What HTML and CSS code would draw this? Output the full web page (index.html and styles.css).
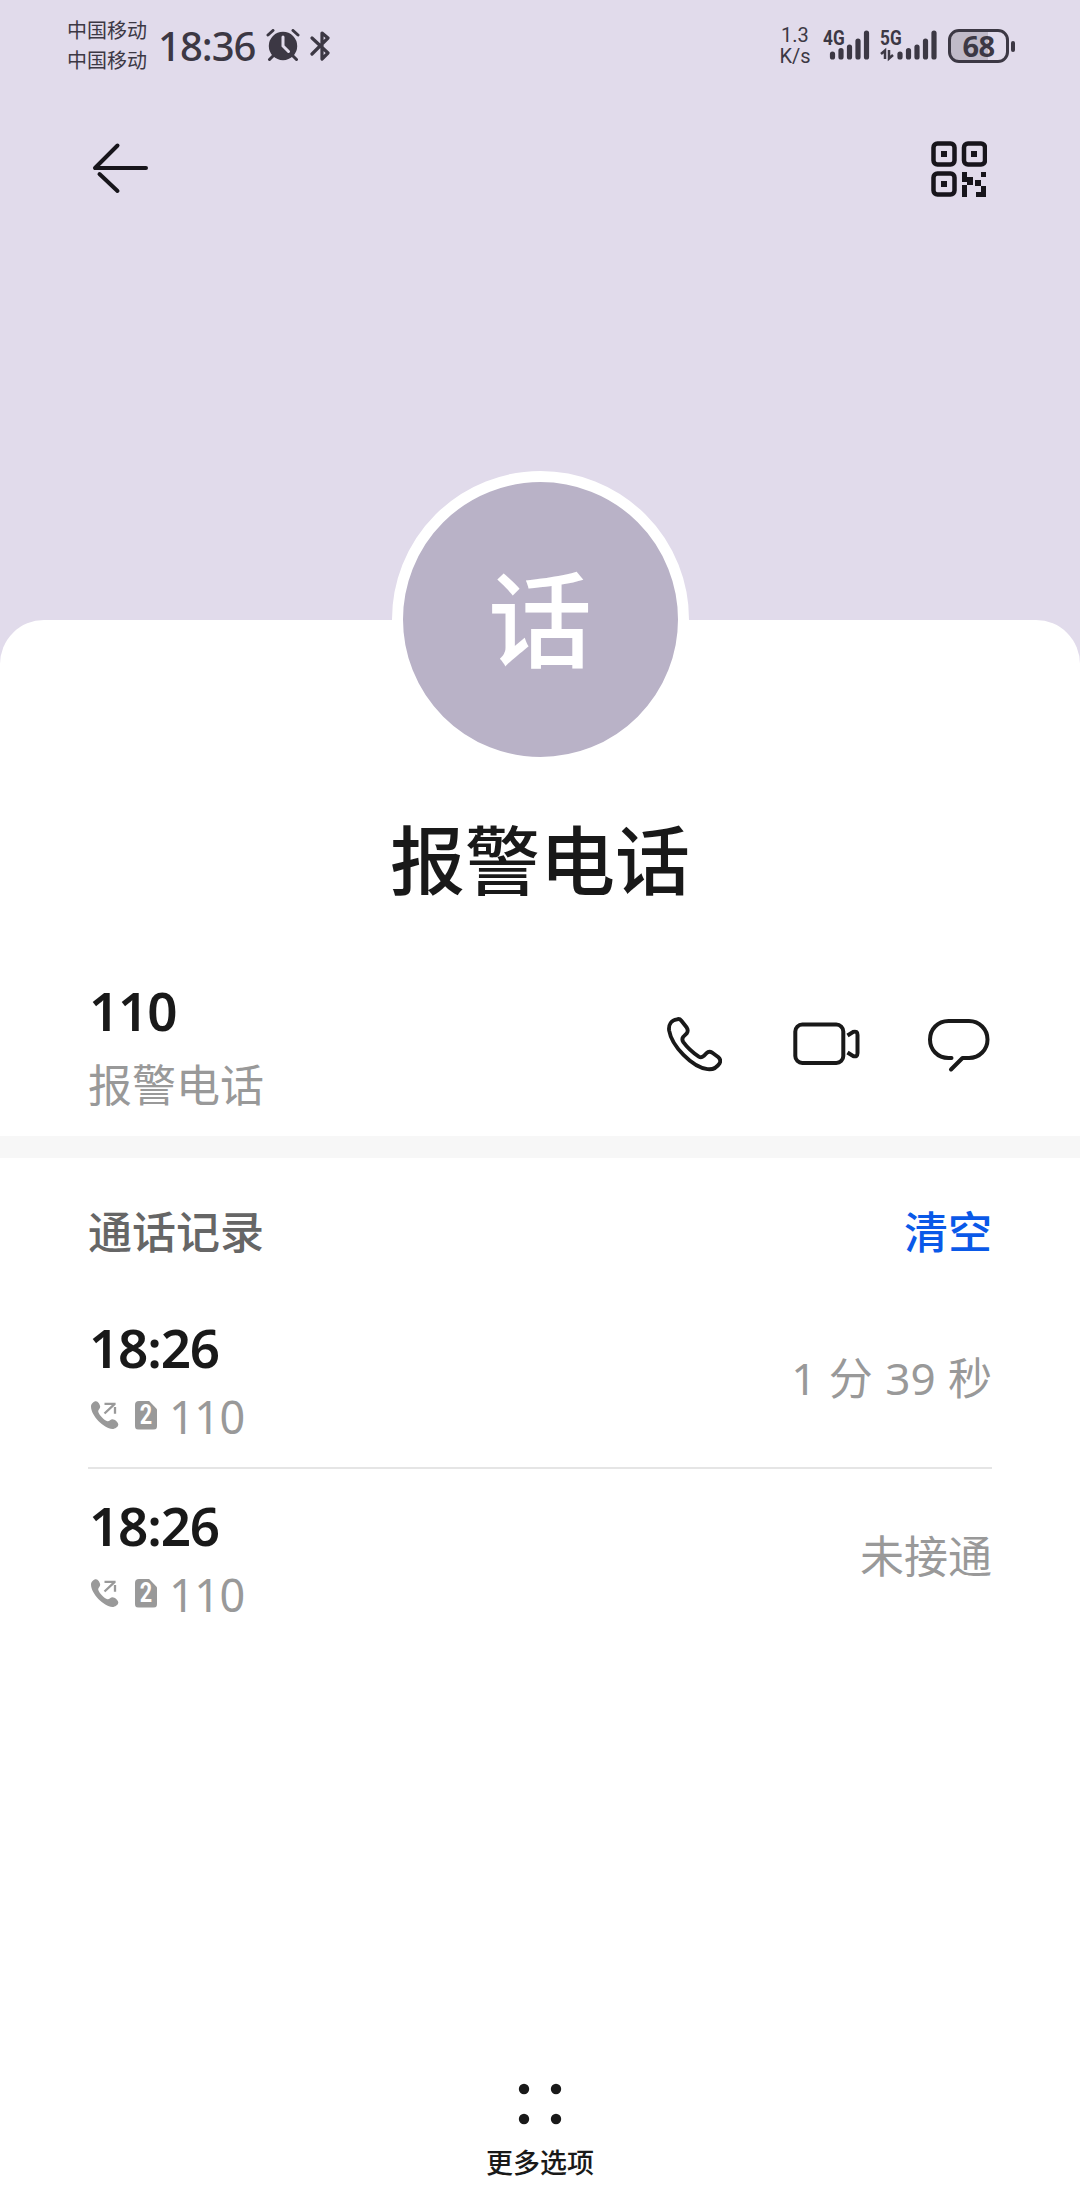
FILE: index.html
```html
<!DOCTYPE html>
<html lang="zh-CN">
<head>
<meta charset="utf-8">
<title>报警电话</title>
<link rel="stylesheet" href="styles.css">
</head>
<body>
<svg class="defs" width="0" height="0">
  <symbol id="outgoing" viewBox="0 0 30 30">
    <path fill="#999" d="M6 1.2C8 1.2 10.2 4.800 10.200 6.800C10.200 8.800 8 9.800 8.200 11.500C8.600 14.500 14.500 20.700 17.500 21.300C19.500 21.500 20.500 19.300 22.500 19.300C24.800 19.300 28.300 22.500 28.300 24.500C28.300 26.800 25 29 22.500 29C13.500 28.500 1 15.500 1 6.500C1 3.800 3.500 1.200 6 1.200Z"/>
    <path fill="none" stroke="#999" stroke-width="2.300" d="M14.500 3.800H25.600M14.500 13.500L24.500 4.200M25 7V13.800"/>
  </symbol>
</svg>
<main class="screen">
  <header class="status">
    <div class="carriers"><span>中国移动</span><span>中国移动</span></div>
    <div class="clock">18:36</div>
    <svg class="alarm" width="34" height="34" viewBox="0 0 34 34">
      <circle cx="17" cy="17" r="14.200" fill="#3c3844"/>
      <path d="M2 6L7 1.500M27 1.500L32 6M7 27L3.500 30.500M27 27L30.500 30.500" stroke="#3c3844" stroke-width="3" stroke-linecap="round"/>
      <path d="M17 8V17L22.500 22.500" fill="none" stroke="#e1dbeb" stroke-width="3" stroke-linecap="round"/>
    </svg>
    <svg class="bluetooth" width="22" height="34" viewBox="0 0 22 34">
      <path d="M2 9L18 24L12 30V4L18 9L2 25" fill="none" stroke="#3c3844" stroke-width="3.200" stroke-linejoin="round" stroke-linecap="round"/>
    </svg>
    <div class="speed"><span>1.3</span><span>K/s</span></div>
    <div class="net net4"><span>4G</span>
      <svg width="48" height="34" viewBox="0 0 48 34"><path d="M9.500 25V28M18 21.500V28M26.500 18V28M35 12V28M43.500 4V28" stroke="#3c3844" stroke-width="5.200" stroke-linecap="round"/></svg>
    </div>
    <div class="net net5"><span>5G</span>
      <svg width="60" height="34" viewBox="0 0 60 34"><path d="M20 25V28M28.500 21.500V28M37 18V28M45.500 12V28M54 4V28" stroke="#3c3844" stroke-width="5.200" stroke-linecap="round"/><path d="M1 25L5 21.500V30M9 21V29.500L13 26" fill="none" stroke="#3c3844" stroke-width="2.500"/></svg>
    </div>
    <div class="battery"><span>68</span></div><i class="tip"></i>
  </header>

  <nav class="toolbar">
    <svg width="56" height="54" viewBox="0 0 56 54" fill="none" stroke="#17151b" stroke-width="4" stroke-linecap="round" stroke-linejoin="round"><path d="M25.500 4.500L3 27H54M25.500 50L7.500 33"/></svg>
    <svg width="56" height="56" viewBox="0 0 56 56">
      <g fill="none" stroke="#17151b" stroke-width="4.500"><rect x="2.500" y="2.500" width="21" height="21" rx="4"/><rect x="33" y="2.500" width="21" height="21" rx="4"/><rect x="2.500" y="32.500" width="21" height="21" rx="4"/></g>
      <path fill="#17151b" d="M10 10h6v6h-6zM40 10h6v6h-6zM10 40h6v6h-6zM31 31h5v5h6v8h-6v12h-5V44h5v-3h-5zM50 31h5v5h-5zM44 39h6v6h-6zM50 45h5v11H45v-5h5z"/>
    </svg>
  </nav>

  <section class="sheet">
    <div class="avatar">话</div>
    <h1 class="name">报警电话</h1>
    <div class="contact">
      <div class="number"><strong>110</strong><span>报警电话</span></div>
      <svg class="call" width="58" height="58" viewBox="0 0 60 60" fill="none" stroke="#191919" stroke-width="4" stroke-linejoin="round"><path d="M13.500 4.500Q16 3.500 18 6L23.500 13Q25.500 16 23.500 19L20 22.500Q18 25 20 28C24 33.500 30 39 36 43Q38.500 44.500 41 42.500L44 39.500Q46.500 37 50 39L56 43.500Q59.500 46.500 57.500 50Q53 57 45 56C29 54 8 32 5.300 16C4.500 10 7.500 5.500 13.500 4.500Z"/></svg>
      <svg class="video" width="68" height="46" viewBox="0 0 68 46" fill="none" stroke="#191919" stroke-width="4"><rect x="2.300" y="3.500" width="48" height="38.500" rx="7"/><path d="M54.500 14.500L60 11Q64.500 9.500 64.500 14V32Q64.500 36.500 60 35L54.500 31.500"/></svg>
      <svg class="chat" width="64" height="56" viewBox="0 0 64 56" fill="none" stroke="#191919" stroke-width="4" stroke-linecap="round" stroke-linejoin="round"><path d="M24.500 41H21.500C10.500 41 3 32.500 3 22.500S10.500 4 21.500 4H42C52.500 4 60.500 12.500 60.500 22.500S52.500 41 42 41H35.500L24 52.500"/></svg>
    </div>
    <div class="band"></div>
    <div class="log-head"><h2>通话记录</h2><a>清空</a></div>
    <div class="entry first">
      <div class="info"><strong>18:26</strong>
        <div class="via"><svg width="30" height="30"><use href="#outgoing"/></svg><b class="sim"><span>2</span></b><span>110</span></div></div>
      <span class="result spaced">1 分 39 秒</span>
    </div>
    <div class="entry">
      <div class="info"><strong>18:26</strong>
        <div class="via"><svg width="30" height="30"><use href="#outgoing"/></svg><b class="sim"><span>2</span></b><span>110</span></div></div>
      <span class="result">未接通</span>
    </div>
  </section>

  <footer class="more">
    <svg width="44" height="44" viewBox="0 0 44 44" fill="#191919"><circle cx="6" cy="7" r="5.200"/><circle cx="38" cy="7" r="5.200"/><circle cx="6" cy="37" r="5.200"/><circle cx="38" cy="37" r="5.200"/></svg>
    <span>更多选项</span>
  </footer>
</main>
</body>
</html>
```
FILE: styles.css
```css
* { box-sizing: border-box; margin: 0; padding: 0; }
body {
  width: 1080px;
  background: #e1dbeb;
  color: #191919;
  font-family: "Noto Sans", "Noto Sans CJK SC", sans-serif;
}
.defs { display: block; height: 0; }
svg { flex: none; display: block; }
.screen { height: 2204px; display: flex; flex-direction: column; overflow: hidden; }

.status { height: 92px; display: flex; align-items: center; padding-left: 67px; color: #3c3844; white-space: nowrap; }
.carriers { width: 91px; display: flex; flex-direction: column; font-size: 20px; line-height: 30px; }
.clock { width: 108px; font-size: 40px; line-height: 50px; font-weight: 500; letter-spacing: -1px; }
.bluetooth { margin-left: 10px; }
.speed { margin-left: 447px; width: 32px; display: flex; flex-direction: column; align-items: center; font: 20px/21px Roboto, sans-serif; }
.net { position: relative; height: 34px; }
.net span { position: absolute; left: 0; top: -1px; font: bold 21px/20px Roboto, sans-serif; transform: scaleX(0.82); transform-origin: left; }
.net4 { margin-left: 12px; }
.net5 { margin-left: 9px; }
.battery { margin-left: 8px; width: 61px; height: 34px; border: 3px solid #3c3844; border-radius: 11px; background: linear-gradient(90deg, #c0bac8 68%, #e1dbeb 68%); font-size: 29px; line-height: 27px; font-weight: 700; letter-spacing: -0.5px; text-align: center; }
.tip { width: 4px; height: 11px; margin-left: 2px; border-radius: 2px; background: #3c3844; }

.toolbar { height: 528px; padding: 49px 92px 0 92px; display: flex; justify-content: space-between; align-items: flex-start; }
.toolbar svg:last-child { margin-right: 1px; }

.sheet { height: 1440px; background: #fff; border-radius: 44px 44px 0 0; display: flex; flex-direction: column; }
.avatar { flex: none; width: 297px; height: 297px; margin: -149px auto 0; border: 11px solid #fff; border-radius: 50%; background: #b9b2c7; color: #fff; font-size: 104px; line-height: 276px; font-weight: 500; text-align: center; }
.name { margin-top: 37px; height: 109px; text-align: center; font-size: 75px; line-height: 110px; font-weight: 500; }
.contact { height: 222px; padding: 68px 88px 0; display: flex; align-items: flex-start; }
.number { width: 576px; display: flex; flex-direction: column; }
.number strong, .info strong { padding-left: 1px; font-size: 53px; line-height: 60px; font-weight: 600; letter-spacing: -1.2px; }
.number strong { margin-top: -1px; }
.number span { margin-top: 14px; font-size: 44px; line-height: 60px; color: #999; }
.call { margin-top: 33px; }
.video { margin: 39px 0 0 71px; }
.chat { margin: 35px 0 0 66px; }
.band { height: 22px; background: #f7f7f7; }
.log-head { height: 148px; padding: 44px 88px 0; display: flex; justify-content: space-between; font-size: 44px; line-height: 60px; color: #0a59e8; }
.log-head h2 { font-size: 44px; font-weight: 500; color: #666; }
.log-head a { font-weight: 500; }
.entry { height: 182px; margin: 0 88px; display: flex; align-items: center; justify-content: space-between; }
.first { height: 163px; padding-bottom: 9px; border-bottom: 2px solid #e5e5e5; }
.info { display: flex; flex-direction: column; }
.via { display: flex; align-items: center; height: 60px; margin-top: 9px; padding-left: 2px; color: #999; font-size: 45px; letter-spacing: -0.5px; }
.via svg, .sim { margin-bottom: 3px; }
.sim { width: 22px; height: 29px; margin-left: 15px; margin-right: 12px; background: #999; color: #fff; border-radius: 4px; clip-path: polygon(0 0, 62% 0, 100% 30%, 100% 100%, 0 100%); font: bold 27px/29px Roboto, sans-serif; letter-spacing: 0; text-align: center; }
.sim span { display: block; transform: scaleX(0.8); }
.result { margin-bottom: 8px; color: #999; font-size: 44px; line-height: 60px; }
.spaced { word-spacing: 1px; }

.more { display: flex; flex-direction: column; align-items: center; padding-top: 22px; height: 144px; flex: none; background: #fff; }
.more span { margin-top: 17px; font-size: 27px; line-height: 40px; font-weight: 500; }
```
